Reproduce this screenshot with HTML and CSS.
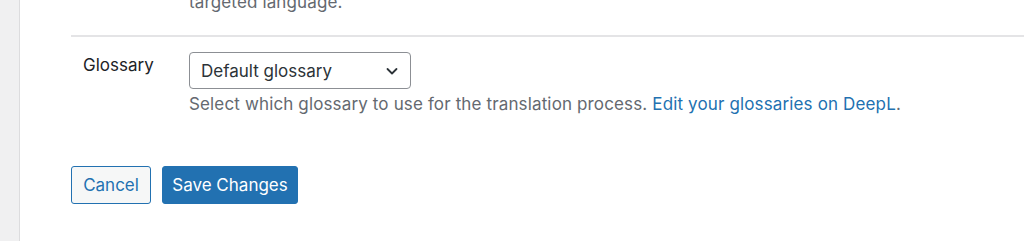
FILE: index.html
```html
<!DOCTYPE html>
<html lang="en">
<head>
  <meta charset="UTF-8">
  <meta name="viewport" content="width=device-width, initial-scale=1.0">
  <title>DeepL Settings</title>
  <link rel="stylesheet" href="styles.css">
</head>
<body>
<div class="wrap">
  <div class="sidebar"></div>
  <div class="main">
    <div class="settings">
      <div class="row row-prev">
        <div class="label"></div>
        <div class="field">
          <p class="description">targeted language.</p>
        </div>
      </div>
      <div class="row">
        <div class="label">Glossary</div>
        <div class="field">
          <div class="select">
            <span>Default glossary</span>
            <svg width="14" height="14" viewBox="0 0 14 14"><path d="M2.5 5 L7 9.5 L11.5 5" fill="none" stroke="#2c3338" stroke-width="1.8" stroke-linecap="round" stroke-linejoin="round"/></svg>
          </div>
          <p class="description">Select which glossary to use for the translation process. <a href="#">Edit your glossaries on DeepL</a>.</p>
        </div>
      </div>
    </div>
    <div class="actions">
      <button class="btn-cancel">Cancel</button>
      <button class="btn-save">Save Changes</button>
    </div>
  </div>
</div>
</body>
</html>
```

FILE: styles.css
```css
body {
  margin: 0;
  padding: 0;
  font-family: Inter, "Noto Sans", sans-serif;
  font-size: 17px;
  color: #1d2327;
  background: #fff;
  overflow: hidden;
}
.wrap {
  display: flex;
  height: 241px;
}
.sidebar {
  width: 19px;
  background: #f0f0f1;
  border-right: 1px solid #dcdcde;
}
.main {
  flex: 1;
  padding-left: 51px;
}
.settings {
  margin-top: -11px;
}
.row {
  display: flex;
  border-bottom: 2px solid #e4e4e6;
}
.row:last-child {
  border-bottom: none;
  padding-top: 15px;
}
.row-prev {
  padding-bottom: 20px;
}
.label {
  width: 106px;
  padding-left: 12px;
  padding-top: 3px;
  color: #1d2327;
  font-size: 17px;
}
.field {
  flex: 1;
}
.description {
  margin: 0;
  color: #646970;
  font-size: 17px;
  line-height: 26px;
  letter-spacing: 0.14px;
}
.description a {
  color: #2271b1;
  text-decoration: none;
}
.select {
  width: 222px;
  height: 37px;
  box-sizing: border-box;
  border: 1px solid #8c8f94;
  border-radius: 4px;
  display: flex;
  align-items: center;
  justify-content: space-between;
  padding: 0 11px 0 11px;
  color: #2c3338;
  font-size: 17px;
  margin-bottom: 2px;
}
.select svg {
  display: block;
}
.actions {
  display: flex;
  gap: 11px;
  margin-top: 49px;
}
.btn-cancel, .btn-save {
  height: 38px;
  padding: 0;
  font-family: inherit;
  font-size: 17px;
  white-space: nowrap;
  border-radius: 3px;
  cursor: pointer;
}
.btn-cancel {
  width: 80px;
  background: #f6f7f7;
  border: 1px solid #2271b1;
  color: #2271b1;
}
.btn-save {
  width: 136px;
  background: #2271b1;
  border: 1px solid #2271b1;
  color: #fff;
}
```
